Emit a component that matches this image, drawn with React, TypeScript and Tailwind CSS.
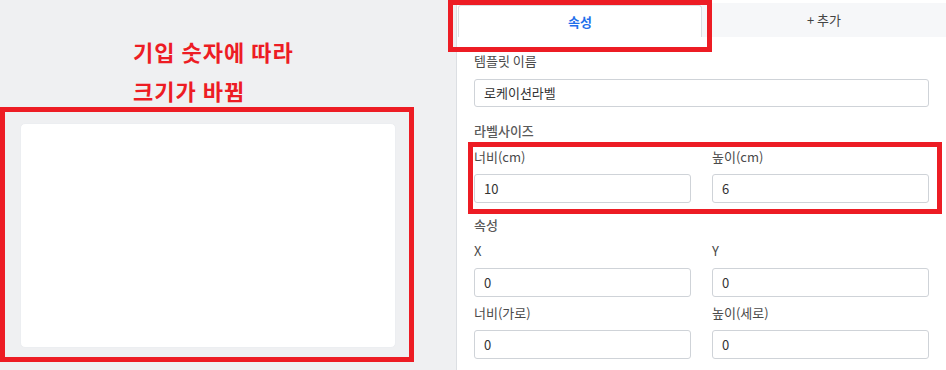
const font = "font-['Noto_Sans_CJK_KR','Noto_Sans',sans-serif]";

function Field({ label, value }: { label: string; value: string }) {
  return (
    <div className="flex flex-col">
      <label className="h-[20px] text-[13px] leading-[20px] text-[#4a4a4a]">{label}</label>
      <div className="mt-[7px] flex h-[29px] items-center rounded-[3px] border border-[#cfd3d8] bg-white px-[9px] text-[13px] text-[#333]">
        {value}
      </div>
    </div>
  );
}

function Heading({ children }: { children: string }) {
  return <h3 className="h-[20px] text-[13px] font-medium leading-[20px] text-[#5a5a5a]">{children}</h3>;
}

export default function App() {
  return (
    <div className={`relative flex h-[370px] w-[946px] overflow-hidden bg-white ${font}`}>
      {/* preview side */}
      <div className="w-[457px] shrink-0 border-r border-[#dcdfe3] bg-[#eff0f2] pl-[20px] pt-[123px]">
        <div className="h-[225px] w-[376px] rounded-[5px] border border-[#eceef1] bg-white" />
      </div>

      {/* property side */}
      <div className="flex flex-1 flex-col">
        <div className="mt-[3px] flex h-[34px]">
          <div className="ml-[1px] mt-[2px] flex w-[244px] items-center justify-center rounded-t-[3px] border-x border-t border-[#dcdfe3] bg-white text-[13px] font-bold text-[#1f6feb]">
            속성
          </div>
          <div className="flex flex-1 items-center justify-center bg-[#f6f7f9] text-[13px] text-[#444]">
            + 추가
          </div>
        </div>

        <div className="flex flex-col px-[17px] pt-[14px]">
          <label className="h-[20px] text-[13px] leading-[20px] text-[#4a4a4a]">템플릿 이름</label>
          <div className="mt-[8px] flex h-[28px] items-center rounded-[3px] border border-[#cfd3d8] px-[9px] text-[13px] text-[#333]">
            로케이션라벨
          </div>

          <div className="mt-[14px]">
            <Heading>라벨사이즈</Heading>
          </div>
          <div className="mt-[6px] grid grid-cols-2 gap-x-[21px]">
            <Field label="너비(cm)" value="10" />
            <Field label="높이(cm)" value="6" />
          </div>

          <div className="mt-[12px]">
            <Heading>속성</Heading>
          </div>
          <div className="mt-[6px] grid grid-cols-2 gap-x-[21px] gap-y-[6px]">
            <Field label="X" value="0" />
            <Field label="Y" value="0" />
            <Field label="너비(가로)" value="0" />
            <Field label="높이(세로)" value="0" />
          </div>
        </div>
      </div>

      {/* annotations */}
      <div className="absolute left-[133px] top-[32px] text-[22px] font-bold leading-[39px] tracking-[1px] text-[#ed1c24]">
        <p>기입 숫자에 따라</p>
        <p>크기가 바뀜</p>
      </div>
      <div className="pointer-events-none absolute left-0 top-[107px] h-[255px] w-[414px] border-[5px] border-[#ed1c24]" />
      <div className="pointer-events-none absolute left-[448px] top-0 h-[52px] w-[264px] border-[5px] border-[#ed1c24]" />
      <div className="pointer-events-none absolute left-[468px] top-[142px] h-[72px] w-[474px] border-[5px] border-[#ed1c24]" />
    </div>
  );
}
